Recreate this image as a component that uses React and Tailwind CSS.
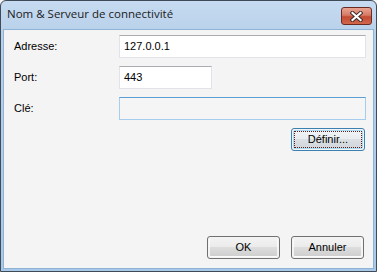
const ui = { fontFamily: '"Liberation Sans", Arial, sans-serif' };

function CloseGlyph() {
  return (
    <svg width="13" height="11" viewBox="0 0 13 11">
      <path d="M2.5 2 L10.5 9 M10.5 2 L2.5 9" stroke="#3a2a2a" strokeWidth="4" strokeLinecap="square" />
      <path d="M2.5 2 L10.5 9 M10.5 2 L2.5 9" stroke="#ffffff" strokeWidth="2.2" strokeLinecap="square" />
    </svg>
  );
}

function TextBox({ value, className = '', focus = false }) {
  return (
    <div
      className={
        'h-[23px] flex items-center px-[4px] text-[11px] text-black border ' +
        (focus
          ? 'bg-[#f5f5f5] border-[#a6cdee] border-t-[#5a9ed6] '
          : 'bg-white border-[#e2e3ea] border-t-[#abadb3] ') +
        className
      }
    >
      {value}
    </div>
  );
}

function Button({ children, focus = false, className = '' }) {
  return (
    <div
      className={
        'h-[23px] rounded-[3px] border p-px ' +
        (focus ? 'border-[#3c7fb1] ' : 'border-[#707070] ') +
        className
      }
    >
      <div
        className={
          'h-full rounded-[2px] border flex items-center justify-center text-[11px] text-black ' +
          (focus
            ? 'border-[#a8dcf5] bg-[linear-gradient(#f0f4f7_0%,#e9edf0_45%,#dbe0e4_50%,#d0d6db_100%)]'
            : 'border-white/70 bg-[linear-gradient(#f2f2f2_0%,#ebebeb_45%,#dddddd_50%,#cfcfcf_100%)]')
        }
      >
        {focus ? (
          <div className="w-full h-full border border-dotted border-[#5a2020] flex items-center justify-center">
            {children}
          </div>
        ) : (
          children
        )}
      </div>
    </div>
  );
}

export default function App() {
  return (
    <div className="w-[377px] h-[272px] bg-[#f4f4f4]" style={ui}>
      <div className="w-full h-full rounded-t-[6px] border border-[#3f4b57] bg-[linear-gradient(#c6dbf1,#b9d1ea_30px,#a8c8ea)] flex flex-col">
        <div className="h-[28px] flex items-center justify-between pl-[6px] pr-[4px] pb-[2px]">
          <span className="text-[11.5px] text-[#1b1b1b]" style={{ fontFamily: '"Open Sans", "Noto Sans", sans-serif' }}>
            Nom &amp; Serveur de connectivité
          </span>
          <div className="w-[31px] h-[18px] mt-[4px] rounded-[3px] border border-[#6b2a22] bg-[linear-gradient(#e8a493_0%,#d77a64_45%,#c24a31_55%,#d2674c_100%)] flex items-center justify-center">
            <CloseGlyph />
          </div>
        </div>
        <div className="flex-1 mx-[2px] mb-[2px] border border-[#8fb3d6] bg-[#f4f4f4] flex flex-col pt-[5px] pl-[10px] pr-[7px] pb-[9px]">
          <div className="flex flex-col gap-[8px]">
            <div className="flex items-center">
              <span className="w-[105px] text-[11px] text-black">Adresse:</span>
              <TextBox value="127.0.0.1" className="flex-1" />
            </div>
            <div className="flex items-center">
              <span className="w-[105px] text-[11px] text-black">Port:</span>
              <TextBox value="443" className="w-[93px]" />
            </div>
            <div className="flex items-center">
              <span className="w-[105px] text-[11px] text-black">Clé:</span>
              <TextBox value="" focus className="flex-1" />
            </div>
            <div className="flex justify-end pr-[1px]">
              <Button focus className="w-[74px]">Définir...</Button>
            </div>
          </div>
          <div className="flex-1" />
          <div className="flex justify-end gap-[11px] pr-[2px]">
            <Button className="w-[73px]">OK</Button>
            <Button className="w-[73px]">Annuler</Button>
          </div>
        </div>
      </div>
    </div>
  );
}
